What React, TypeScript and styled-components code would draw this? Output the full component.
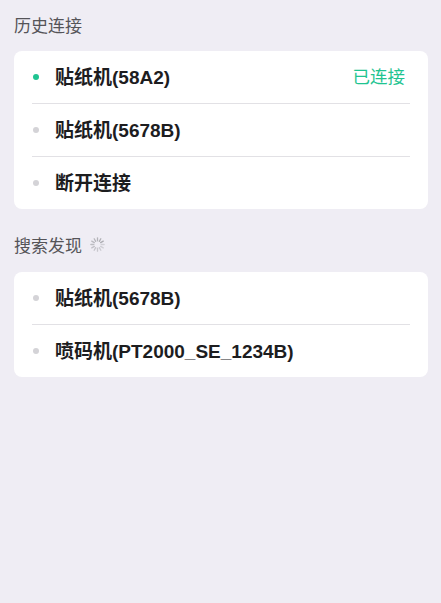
import { FC } from "react";
import styled, { createGlobalStyle } from "styled-components";

const GlobalStyle = createGlobalStyle`
  html, body {
    margin: 0;
    padding: 0;
    background: #efedf4;
    font-family: "Liberation Sans", "Noto Sans CJK SC", sans-serif;
  }
`;

interface Device {
  name: string;
  active?: boolean;
  status?: string;
}

const history: Device[] = [
  { name: "贴纸机(58A2)", active: true, status: "已连接" },
  { name: "贴纸机(5678B)" },
  { name: "断开连接" },
];

const found: Device[] = [
  { name: "贴纸机(5678B)" },
  { name: "喷码机(PT2000_SE_1234B)" },
];

const Spinner: FC = () => (
  <svg width="15" height="15" viewBox="0 0 14 14">
    {Array.from({ length: 12 }).map((_, i) => {
      const a = (i * Math.PI) / 6;
      return (
        <line
          key={i}
          x1={7 + Math.cos(a) * 3.4}
          y1={7 + Math.sin(a) * 3.4}
          x2={7 + Math.cos(a) * 6.2}
          y2={7 + Math.sin(a) * 6.2}
          stroke="#a8a8ad"
          strokeOpacity={0.4 + (i / 12) * 0.6}
          strokeWidth="1.2"
          strokeLinecap="round"
        />
      );
    })}
  </svg>
);

const DeviceList: FC<{ items: Device[] }> = ({ items }) => (
  <Card>
    {items.map((d, i) => (
      <Row key={i} $last={i === items.length - 1}>
        <Dot $active={!!d.active} />
        <Name>{d.name}</Name>
        {d.status && <Status>{d.status}</Status>}
      </Row>
    ))}
  </Card>
);

export default function App() {
  return (
    <Page>
      <GlobalStyle />
      <SectionTitle>历史连接</SectionTitle>
      <DeviceList items={history} />
      <SectionTitle $gap>
        搜索发现
        <Spinner />
      </SectionTitle>
      <DeviceList items={found} />
    </Page>
  );
}

const Page = styled.div`
  min-height: 603px;
  box-sizing: border-box;
  padding: 0 13px 0 14px;
  background: #efedf4;
`;

const SectionTitle = styled.div<{ $gap?: boolean }>`
  display: flex;
  align-items: center;
  gap: 8px;
  height: 51px;
  box-sizing: border-box;
  padding-bottom: ${(p) => (p.$gap ? "4px" : "2px")};
  margin-top: ${(p) => (p.$gap ? "12px" : "0")};
  font-size: 17px;
  color: #555458;
`;

const Card = styled.div`
  background: #fff;
  border-radius: 8px;
  padding: 0 18px;
`;

const Row = styled.div<{ $last: boolean }>`
  display: flex;
  align-items: center;
  height: 52px;
  box-sizing: content-box;
  padding-bottom: 0;
  border-bottom: ${(p) => (p.$last ? "none" : "1px solid #e2e1e5")};
`;

const Dot = styled.span<{ $active: boolean }>`
  width: 6px;
  height: 6px;
  border-radius: 50%;
  margin-left: 1px;
  margin-right: 16px;
  background: ${(p) => (p.$active ? "#1fc491" : "#d4d3d7")};
`;

const Name = styled.span`
  flex: 1;
  padding-bottom: 3px;
  font-size: 19px;
  font-weight: 600;
  color: #1d1d1f;
`;

const Status = styled.span`
  margin-right: 5px;
  padding-bottom: 3px;
  font-size: 17.5px;
  color: #1fc491;
`;
